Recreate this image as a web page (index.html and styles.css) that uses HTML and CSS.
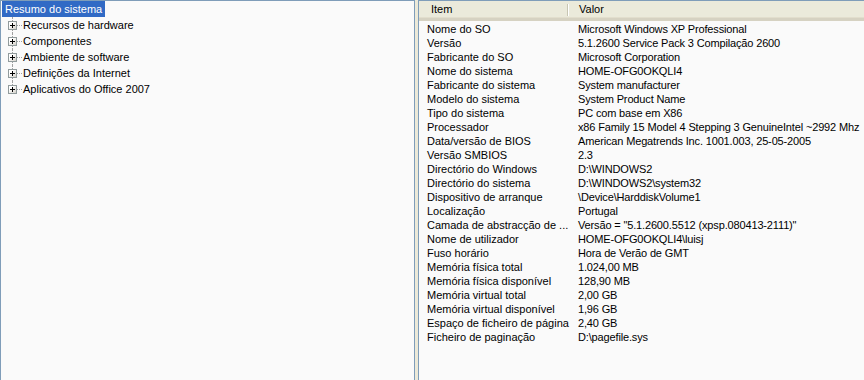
FILE: index.html
```html
<!DOCTYPE html>
<html lang="pt">
<head>
    <meta charset="UTF-8">
    <title>Informações do sistema</title>
    <link rel="stylesheet" href="styles.css">
</head>
<body>
    <div class="tree-pane">
        <div class="tree-root"><span class="selected">Resumo do sistema</span></div>
        <ul class="tree">
            <li><span class="plus"></span><span class="dots"></span>Recursos de hardware</li>
            <li><span class="plus"></span><span class="dots"></span>Componentes</li>
            <li><span class="plus"></span><span class="dots"></span>Ambiente de software</li>
            <li><span class="plus"></span><span class="dots"></span>Definições da Internet</li>
            <li class="last"><span class="plus"></span><span class="dots"></span>Aplicativos do Office 2007</li>
        </ul>
    </div>
    <div class="splitter"></div>
    <div class="list-pane">
        <div class="list-header">
            <div class="col-item">Item</div>
            <div class="col-value">Valor</div>
        </div>
        <div class="list-body">
            <div class="row"><div class="col-item">Nome do SO</div><div class="col-value">Microsoft Windows XP Professional</div></div>
            <div class="row"><div class="col-item">Versão</div><div class="col-value">5.1.2600 Service Pack 3 Compilação 2600</div></div>
            <div class="row"><div class="col-item">Fabricante do SO</div><div class="col-value">Microsoft Corporation</div></div>
            <div class="row"><div class="col-item">Nome do sistema</div><div class="col-value">HOME-OFG0OKQLI4</div></div>
            <div class="row"><div class="col-item">Fabricante do sistema</div><div class="col-value">System manufacturer</div></div>
            <div class="row"><div class="col-item">Modelo do sistema</div><div class="col-value">System Product Name</div></div>
            <div class="row"><div class="col-item">Tipo do sistema</div><div class="col-value">PC com base em X86</div></div>
            <div class="row"><div class="col-item">Processador</div><div class="col-value">x86 Family 15 Model 4 Stepping 3 GenuineIntel ~2992 Mhz</div></div>
            <div class="row"><div class="col-item">Data/versão de BIOS</div><div class="col-value">American Megatrends Inc. 1001.003, 25-05-2005</div></div>
            <div class="row"><div class="col-item">Versão SMBIOS</div><div class="col-value">2.3</div></div>
            <div class="row"><div class="col-item">Directório do Windows</div><div class="col-value">D:\WINDOWS2</div></div>
            <div class="row"><div class="col-item">Directório do sistema</div><div class="col-value">D:\WINDOWS2\system32</div></div>
            <div class="row"><div class="col-item">Dispositivo de arranque</div><div class="col-value">\Device\HarddiskVolume1</div></div>
            <div class="row"><div class="col-item">Localização</div><div class="col-value">Portugal</div></div>
            <div class="row"><div class="col-item">Camada de abstracção de ...</div><div class="col-value">Versão = "5.1.2600.5512 (xpsp.080413-2111)"</div></div>
            <div class="row"><div class="col-item">Nome de utilizador</div><div class="col-value">HOME-OFG0OKQLI4\luisj</div></div>
            <div class="row"><div class="col-item">Fuso horário</div><div class="col-value">Hora de Verão de GMT</div></div>
            <div class="row"><div class="col-item">Memória física total</div><div class="col-value">1.024,00 MB</div></div>
            <div class="row"><div class="col-item">Memória física disponível</div><div class="col-value">128,90 MB</div></div>
            <div class="row"><div class="col-item">Memória virtual total</div><div class="col-value">2,00 GB</div></div>
            <div class="row"><div class="col-item">Memória virtual disponível</div><div class="col-value">1,96 GB</div></div>
            <div class="row"><div class="col-item">Espaço de ficheiro de página</div><div class="col-value">2,40 GB</div></div>
            <div class="row"><div class="col-item">Ficheiro de paginação</div><div class="col-value">D:\pagefile.sys</div></div>
        </div>
    </div>
</body>
</html>
```

FILE: styles.css
```css
html, body {
    height: 100%;
}
body {
    margin: 0;
    display: flex;
    background-color: #ece9d8;
    font-family: "Liberation Sans", Arial, sans-serif;
    font-size: 11px;
    color: #000;
    overflow: hidden;
}
.tree-pane {
    width: 413px;
    flex-shrink: 0;
    background-color: #fafafa;
    border: 1px solid #7f9db9;
    border-bottom: none;
}
.tree-root {
    height: 16px;
    padding-left: 1px;
}
.selected {
    display: inline-block;
    height: 16px;
    line-height: 16px;
    padding: 0 3px 0 3px;
    background-color: #316ac5;
    color: #fff;
}
.tree {
    list-style: none;
    margin: 0;
    padding: 0;
}
.tree li {
    position: relative;
    height: 16px;
    line-height: 16px;
    display: flex;
    align-items: center;
    padding-left: 7px;
}
.tree li::before {
    content: "";
    position: absolute;
    left: 11px;
    top: 0;
    height: 16px;
    border-left: 1px dotted #a0a0a0;
}
.tree li.last::before {
    height: 8px;
}
.plus {
    position: relative;
    z-index: 1;
    width: 7px;
    height: 7px;
    border: 1px solid #919b9c;
    background: linear-gradient(135deg, #ffffff 30%, #d4d0c8);
    flex-shrink: 0;
}
.plus::before {
    content: "";
    position: absolute;
    left: 1px;
    top: 3px;
    width: 5px;
    height: 1px;
    background-color: #000;
}
.plus::after {
    content: "";
    position: absolute;
    left: 3px;
    top: 1px;
    width: 1px;
    height: 5px;
    background-color: #000;
}
.dots {
    width: 5px;
    margin-right: 1px;
    border-top: 1px dotted #a0a0a0;
}
.splitter {
    width: 3px;
    flex-shrink: 0;
}
.list-pane {
    flex: 1;
    min-width: 0;
    overflow: hidden;
    background-color: #fafafa;
    border: 1px solid #7f9db9;
    border-bottom: none;
    border-right: none;
}
.list-header {
    display: flex;
    height: 17px;
    line-height: 17px;
    background-color: #ebeadb;
    border-bottom: 3px solid #d6d2c2;
    box-shadow: inset 0 -1px 0 #e2decd;
}
.list-header .col-item {
    position: relative;
    padding-left: 12px;
}
.list-header .col-item::after {
    content: "";
    position: absolute;
    right: 1px;
    top: 3px;
    height: 12px;
    border-right: 1px solid #c7c5b2;
    box-shadow: 1px 0 0 #fff;
}
.list-header .col-value {
    padding-left: 10px;
}
.list-body {
    padding-top: 1px;
}
.row {
    display: flex;
    height: 14px;
    line-height: 14px;
    white-space: nowrap;
}
.col-item {
    width: 150px;
    padding-left: 8px;
    box-sizing: border-box;
    flex-shrink: 0;
}
.col-value {
    padding-left: 9px;
}
.row .col-value {
    letter-spacing: -0.15px;
}
```
